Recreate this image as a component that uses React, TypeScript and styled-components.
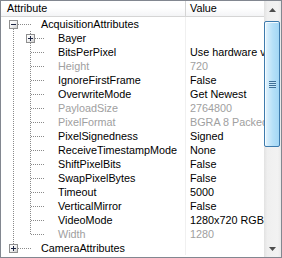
import React from 'react';
import styled, { createGlobalStyle, css } from 'styled-components';

const GlobalStyle = createGlobalStyle`
  html, body {
    margin: 0;
    padding: 0;
    background: #ffffff;
  }
  body {
    font-family: "Liberation Sans", Arial, sans-serif;
    font-size: 10.8px;
    color: #000000;
  }
`;

interface Attr {
  name: string;
  value?: string;
  disabled?: boolean;
  level: number;
  expander?: 'plus' | 'minus';
  first?: boolean;
  last?: boolean;
}

const rows: Attr[] = [
  { name: 'AcquisitionAttributes', level: 0, expander: 'minus', first: true },
  { name: 'Bayer', level: 1, expander: 'plus' },
  { name: 'BitsPerPixel', value: 'Use hardware value', level: 1 },
  { name: 'Height', value: '720', level: 1, disabled: true },
  { name: 'IgnoreFirstFrame', value: 'False', level: 1 },
  { name: 'OverwriteMode', value: 'Get Newest', level: 1 },
  { name: 'PayloadSize', value: '2764800', level: 1, disabled: true },
  { name: 'PixelFormat', value: 'BGRA 8 Packed', level: 1, disabled: true },
  { name: 'PixelSignedness', value: 'Signed', level: 1 },
  { name: 'ReceiveTimestampMode', value: 'None', level: 1 },
  { name: 'ShiftPixelBits', value: 'False', level: 1 },
  { name: 'SwapPixelBytes', value: 'False', level: 1 },
  { name: 'Timeout', value: '5000', level: 1 },
  { name: 'VerticalMirror', value: 'False', level: 1 },
  { name: 'VideoMode', value: '1280x720 RGB24', level: 1 },
  { name: 'Width', value: '1280', level: 1, disabled: true, last: true },
  { name: 'CameraAttributes', level: 0, expander: 'plus', last: true },
];

const LINE = '#8a8a8a';
const vDots = `repeating-linear-gradient(to bottom, ${LINE} 0 1px, transparent 1px 2px)`;
const hDots = `repeating-linear-gradient(to right, ${LINE} 0 1px, transparent 1px 2px)`;

const Grid = styled.div`
  width: 282px;
  height: 258px;
  box-sizing: border-box;
  border: 1px solid #828790;
  display: flex;
  overflow: hidden;
  background: #ffffff;
`;

const Main = styled.div`
  flex: 1;
  min-width: 0;
  display: flex;
  flex-direction: column;
`;

const Header = styled.div`
  display: flex;
  height: 15px;
  border-bottom: 1px solid #d5d5d5;
  background: linear-gradient(to bottom, #ffffff 0%, #ffffff 45%, #f3f4f6 100%);
`;

const HeaderCell = styled.div<{ $first?: boolean }>`
  line-height: 15px;
  white-space: nowrap;
  overflow: hidden;
  ${p => p.$first
    ? css`
      width: 185px;
      padding-left: 6px;
      box-sizing: border-box;
      border-right: 1px solid #d5d5d5;
    `
    : css`
      flex: 1;
      padding-left: 4px;
    `}
`;

const Row = styled.div`
  display: flex;
  height: 14px;
  line-height: 14px;
`;

const NameCell = styled.div`
  width: 185px;
  box-sizing: border-box;
  padding-left: 4px;
  border-right: 1px solid #f0f0f0;
  display: flex;
  overflow: hidden;
  white-space: nowrap;
`;

const Slot = styled.div<{ $up?: boolean; $down?: boolean; $right?: boolean }>`
  width: 17px;
  height: 14px;
  flex: none;
  box-sizing: border-box;
  padding: 3px 0 0 4px;
  background:
    ${p => (p.$up ? `${vDots} 8px 0 / 1px 7px no-repeat,` : '')}
    ${p => (p.$down ? `${vDots} 8px 8px / 1px 6px no-repeat,` : '')}
    ${p => (p.$right ? `${hDots} 9px 7px / 8px 1px no-repeat,` : '')}
    transparent;
`;

const Expander = styled.div<{ $open: boolean }>`
  width: 9px;
  height: 9px;
  box-sizing: border-box;
  border: 1px solid #8f8f8f;
  background:
    linear-gradient(#1c2442, #1c2442) center / 5px 1px no-repeat,
    ${p => (p.$open ? '' : 'linear-gradient(#1c2442, #1c2442) center / 1px 5px no-repeat,')}
    linear-gradient(135deg, #ffffff 0%, #f4f4f4 45%, #cfcfcf 100%);
`;

const Stub = styled.div<{ $reach: number }>`
  width: 19px;
  height: 14px;
  flex: none;
  background: ${hDots} 0 7px / ${p => p.$reach}px 1px no-repeat;
`;

const Label = styled.span<{ $disabled?: boolean }>`
  color: ${p => (p.$disabled ? '#a0a0a0' : '#000000')};
`;

const ValueCell = styled.div<{ $disabled?: boolean }>`
  flex: 1;
  min-width: 0;
  padding-left: 4px;
  overflow: hidden;
  white-space: nowrap;
  color: ${p => (p.$disabled ? '#a0a0a0' : '#000000')};
`;

const ScrollBar = styled.div`
  width: 17px;
  flex: none;
  display: flex;
  flex-direction: column;
  background: linear-gradient(to right, #e2e2e2 0%, #efefef 20%, #f2f2f2 80%, #e9e9e9 100%);
`;

const ArrowButton = styled.div`
  height: 17px;
  flex: none;
  display: flex;
  align-items: center;
  justify-content: center;
`;

const Track = styled.div`
  flex: 1;
  display: flex;
  flex-direction: column;
  padding: 3px 1px 0 0;
`;

const Thumb = styled.div`
  height: 126px;
  box-sizing: border-box;
  border: 1px solid #3d7bad;
  border-radius: 2px;
  background: linear-gradient(to right, #e7f5fd 0%, #cdeafb 25%, #b6e0f8 55%, #a3d7f5 100%);
  box-shadow: inset 1px 1px 0 #f4fbff;
  display: flex;
  align-items: center;
  justify-content: center;
`;

const Grip = styled.div`
  width: 7px;
  height: 7px;
  background: repeating-linear-gradient(to bottom, #2a5c86 0 1px, #c9e9fb 1px 2px);
  opacity: 0.85;
`;

const Arrow = ({ down }: { down?: boolean }) => (
  <svg width="7" height="4" viewBox="0 0 7 4">
    <polygon
      points={down ? '0,0 7,0 3.5,4' : '0,4 7,4 3.5,0'}
      fill="#4d4d4d"
    />
  </svg>
);

function TreeRow({ item }: { item: Attr }) {
  const slots: React.ReactNode[] = [];
  if (item.level === 1) {
    slots.push(<Slot key="p" $up $down />);
  }
  slots.push(
    <Slot key="o" $up={!item.first} $down={!item.last} $right>
      {item.expander && <Expander $open={item.expander === 'minus'} />}
    </Slot>
  );
  return (
    <Row>
      <NameCell>
        {slots}
        <Stub $reach={item.level === 0 ? 9 : 6} />
        <Label $disabled={item.disabled}>{item.name}</Label>
      </NameCell>
      <ValueCell $disabled={item.disabled}>{item.value}</ValueCell>
    </Row>
  );
}

export default function App() {
  return (
    <>
      <GlobalStyle />
      <Grid>
        <Main>
          <Header>
            <HeaderCell $first>Attribute</HeaderCell>
            <HeaderCell>Value</HeaderCell>
          </Header>
          {rows.map(r => (
            <TreeRow key={r.name} item={r} />
          ))}
        </Main>
        <ScrollBar>
          <ArrowButton>
            <Arrow />
          </ArrowButton>
          <Track>
            <Thumb>
              <Grip />
            </Thumb>
          </Track>
          <ArrowButton>
            <Arrow down />
          </ArrowButton>
        </ScrollBar>
      </Grid>
    </>
  );
}
